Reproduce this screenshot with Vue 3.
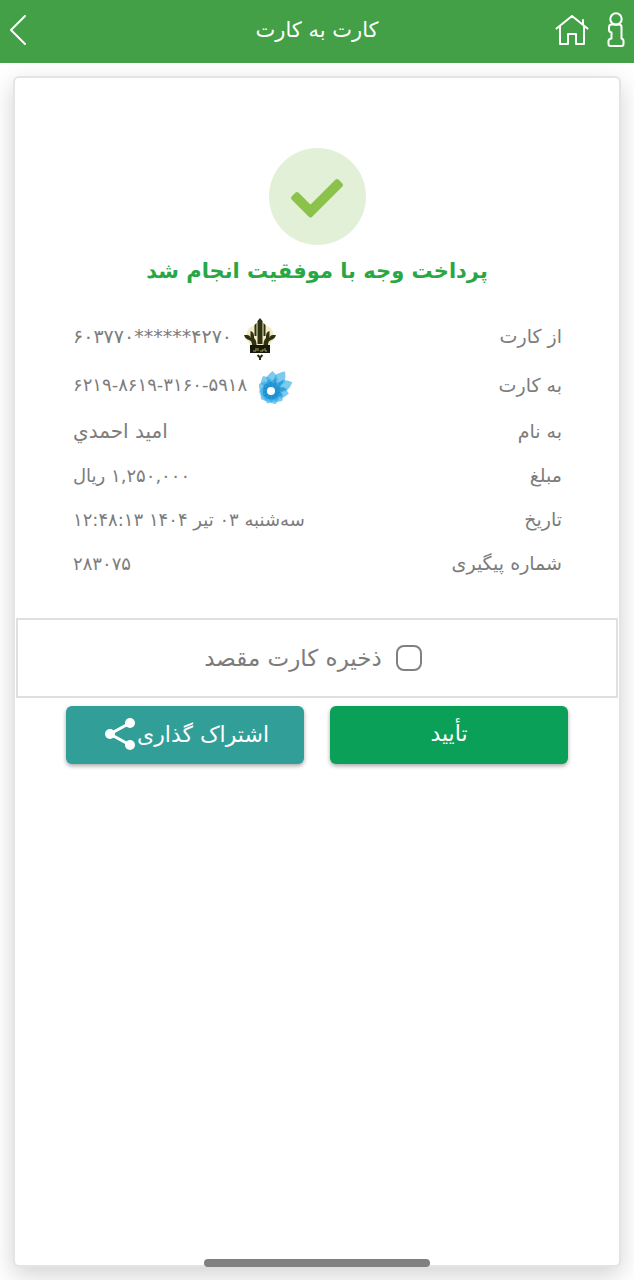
<script setup>
import { ref } from 'vue'

const saveCard = ref(false)
const petals = [
  { angle: -95, length: 12 },
  { angle: -60, length: 14 },
  { angle: -28, length: 17 },
  { angle: 5, length: 20 },
  { angle: 36, length: 24 },
  { angle: 68, length: 23 },
  { angle: 98, length: 18 },
  { angle: 130, length: 15 },
  { angle: 162, length: 14 },
  { angle: 196, length: 13 },
  { angle: 230, length: 13 },
]

const rows = [
  { label: 'از کارت', value: '۶۰۳۷۷۰******۴۲۷۰', kind: 'account masked', logo: 'wheat' },
  { label: 'به کارت', value: '۶۲۱۹-۸۶۱۹-۳۱۶۰-۵۹۱۸', kind: 'account', logo: 'flower' },
  { label: 'به نام', value: 'امید احمدي', kind: 'name' },
  { label: 'مبلغ', value: '۱,۲۵۰,۰۰۰ ریال' },
  { label: 'تاریخ', value: 'سه‌شنبه ۰۳ تیر ۱۴۰۴ ۱۲:۴۸:۱۳' },
  { label: 'شماره پیگیری', value: '۲۸۳۰۷۵' },
]
</script>

<template>
  <div class="page" dir="rtl" lang="fa">
    <header class="bar">
      <div class="side">
        <button class="icon-btn" type="button" aria-label="اطلاعات">
          <svg width="18" height="36" viewBox="0 0 18 36" fill="none" stroke="#fff" stroke-width="2" stroke-linejoin="round">
            <circle cx="9" cy="7" r="5.7" />
            <path d="M4.500 12.500H12Q14.500 12.500 14.500 15V26.500Q16.500 27 16.500 29V32Q16.500 34 14.500 34H3.500Q1.500 34 1.500 32V29Q1.500 27 4.500 26.500V20.500Q2 20 2 18V15.500Q2 12.500 4.500 12.500Z" />
          </svg>
        </button>
        <button class="icon-btn" type="button" aria-label="خانه">
          <svg width="34" height="32" viewBox="0 0 34 32" fill="none" stroke="#fff" stroke-width="2" stroke-linecap="round" stroke-linejoin="round">
            <path d="M1.500 14.500 17 2 32.500 14.500M28 10.500V6M5 12.500V30H13V20H21V30H29V12.500" />
          </svg>
        </button>
      </div>
      <h1 class="title">کارت به کارت</h1>
      <div class="side end">
        <button class="icon-btn" type="button" aria-label="بازگشت">
          <svg width="18" height="32" viewBox="0 0 18 32" fill="none" stroke="#fff" stroke-width="2" stroke-linecap="round" stroke-linejoin="round">
            <path d="M16 2 2 16 16 30" />
          </svg>
        </button>
      </div>
    </header>

    <main class="card">
      <div class="status">
        <svg width="97" height="97" viewBox="0 0 97 97" aria-hidden="true">
          <circle cx="48.500" cy="48.500" r="48.500" fill="#e3f0d8" />
          <path d="M24 50 28 46 41.500 59.500 68 33 72 37 41.500 67.500Z" fill="#8bc34a" stroke="#8bc34a" stroke-width="4" stroke-linejoin="round" />
        </svg>
        <h2 class="message">پرداخت وجه با موفقیت انجام شد</h2>
      </div>

      <dl class="details">
        <div v-for="row in rows" :key="row.label" class="row" :class="row.kind">
          <dt>{{ row.label }}</dt>
          <dd>
            <svg v-if="row.logo === 'wheat'" class="logo" width="32" height="42" viewBox="0 0 32 42" aria-hidden="true">
              <path d="M1 19 5 10 11 7 16 1 21 7 27 10 31 19 26 27H6Z" fill="#efe6b8" opacity=".8" />
              <path d="M13.500 3 16 0 18.500 3V26H13.500ZM10.500 7 12.500 5V18H10.500ZM19.500 5 21.500 7V18H19.500Z" fill="#2f3212" />
              <path d="M0 17H3Q6 17 6.500 20V13Q10 14 10 18V20Q12.500 22 12.500 27H8Q8 23 5 22Q1 21 0 17ZM32 17H29Q26 17 25.500 20V13Q22 14 22 18V20Q19.500 22 19.500 27H24Q24 23 27 22Q31 21 32 17Z" fill="#2f3212" />
              <rect x="6" y="27" width="20" height="8" fill="#15190c" />
              <path d="M9 33H12V30M14 33V30M16 33H19V31M21 30V33H23" fill="none" stroke="#a8a05e" stroke-width="1" />
              <path d="M13.500 37 16 39.500 18.500 37M16 39V42" fill="none" stroke="#2c2e10" stroke-width="2" />
            </svg>
            <svg v-if="row.logo === 'flower'" class="logo" width="36" height="36" viewBox="0 0 36 36" aria-hidden="true">
              <g transform="translate(12 21)">
                <path
                  v-for="p in petals"
                  :key="p.angle"
                  :d="`M0 0L-6 ${-p.length * 0.65}Q-3 ${-p.length * 0.9} 0 ${-p.length}Q4 ${-p.length * 0.85} 6 ${-p.length * 0.6}Z`"
                  fill="#35aee6"
                  fill-opacity=".65"
                  :transform="`rotate(${p.angle})`"
                />
                <path
                  v-for="p in petals"
                  :key="'inner' + p.angle"
                  :d="`M0 0L-4 -7L0 ${-p.length * 0.7}L4 -7Z`"
                  fill="#0a7fc6"
                  fill-opacity=".45"
                  :transform="`rotate(${p.angle + 14})`"
                />
                <circle r="4" fill="#fff" />
              </g>
            </svg>
            <bdi :dir="row.logo ? 'ltr' : 'rtl'">{{ row.value }}</bdi>
          </dd>
        </div>
      </dl>

      <label class="save" for="save-card">
        <input id="save-card" v-model="saveCard" type="checkbox" />
        <span>ذخیره کارت مقصد</span>
      </label>

      <div class="actions">
        <button class="btn confirm" type="button">تأیید</button>
        <button class="btn share" type="button">
          <span>اشتراک گذاری</span>
          <svg width="30" height="34" viewBox="0 0 30 34" aria-hidden="true">
            <path d="M25 6 5 17 25 28" fill="none" stroke="#fff" stroke-width="3" />
            <circle cx="25" cy="6" r="5" fill="#fff" />
            <circle cx="5" cy="17" r="5" fill="#fff" />
            <circle cx="25" cy="28" r="5" fill="#fff" />
          </svg>
        </button>
      </div>
    </main>

    <div class="home-indicator"></div>
  </div>
</template>

<style>
body {
  margin: 0;
  background: #fff;
}
</style>

<style scoped>
.page {
  position: relative;
  display: flex;
  flex-direction: column;
  box-sizing: border-box;
  min-height: 100vh;
  overflow: hidden;
  color: #7c7c7c;
  font-family: "DejaVu Sans", sans-serif;
}

button {
  font-family: inherit;
  border: 0;
  cursor: pointer;
}

.bar {
  position: relative;
  z-index: 1;
  display: grid;
  grid-template-columns: 1fr auto 1fr;
  align-items: center;
  height: 63px;
  padding: 0 9px 4px;
  box-sizing: border-box;
  background: #43a047;
}

.side {
  display: flex;
  align-items: center;
  gap: 18px;
}

.side.end {
  justify-content: flex-end;
}

.icon-btn {
  display: flex;
  padding: 0;
  background: none;
}

.title {
  margin: 0;
  color: #fff;
  font-size: 21px;
  font-weight: 400;
  line-height: 32px;
}

.card {
  display: flex;
  flex: 1;
  flex-direction: column;
  margin: 13px;
  border: 2px solid #e4e4e4;
  border-radius: 6px;
  background: #fff;
  box-shadow: 0 8px 24px rgba(0, 0, 0, 0.18);
}

.status {
  display: flex;
  flex-direction: column;
  align-items: center;
  padding-top: 70px;
}

.message {
  margin: 8px 0 0;
  color: #28a745;
  font-size: 21px;
  font-weight: 700;
  line-height: 36px;
}

.details {
  margin: 22px 57px 0 58px;
}

.row {
  display: flex;
  align-items: center;
  justify-content: space-between;
  height: 44px;
}

.row.account {
  height: 49px;
}

.row dt,
.row dd {
  margin: 0;
  white-space: nowrap;
}

.row dt {
  font-size: 19px;
}

.row dd {
  display: flex;
  align-items: center;
  gap: 12px;
  font-size: 18px;
}

.row.masked dd {
  font-size: 19px;
}

.row.name dd {
  font-size: 20px;
}

.logo {
  margin-top: 6px;
}

.save {
  display: flex;
  align-items: center;
  justify-content: center;
  gap: 14px;
  height: 80px;
  margin: 33px 1px 0;
  padding: 0 8px 0 0;
  border: 2px solid #e0e0e3;
  box-sizing: border-box;
  font-size: 23px;
}

.save input {
  width: 26px;
  height: 26px;
  margin: 0;
  border: 2px solid #808080;
  border-radius: 8px;
  appearance: none;
}

.save input:checked {
  background: #43a047;
}

.actions {
  display: grid;
  grid-template-columns: 1fr 1fr;
  gap: 26px;
  margin: 8px 51px 0;
}

.btn {
  display: flex;
  align-items: center;
  justify-content: center;
  gap: 2px;
  height: 58px;
  padding: 0 8px 4px;
  border-radius: 6px;
  color: #fff;
  font-size: 22px;
  box-shadow: 0 2px 4px rgba(0, 0, 0, 0.35);
}

.confirm {
  background: #0aa058;
}

.share {
  padding: 0 4px 2px 8px;
  background: #319e98;
}

.home-indicator {
  position: absolute;
  bottom: 13px;
  left: 50%;
  z-index: 2;
  width: 226px;
  height: 8px;
  margin-left: -113px;
  border-radius: 4px;
  background: #808080;
}
</style>
